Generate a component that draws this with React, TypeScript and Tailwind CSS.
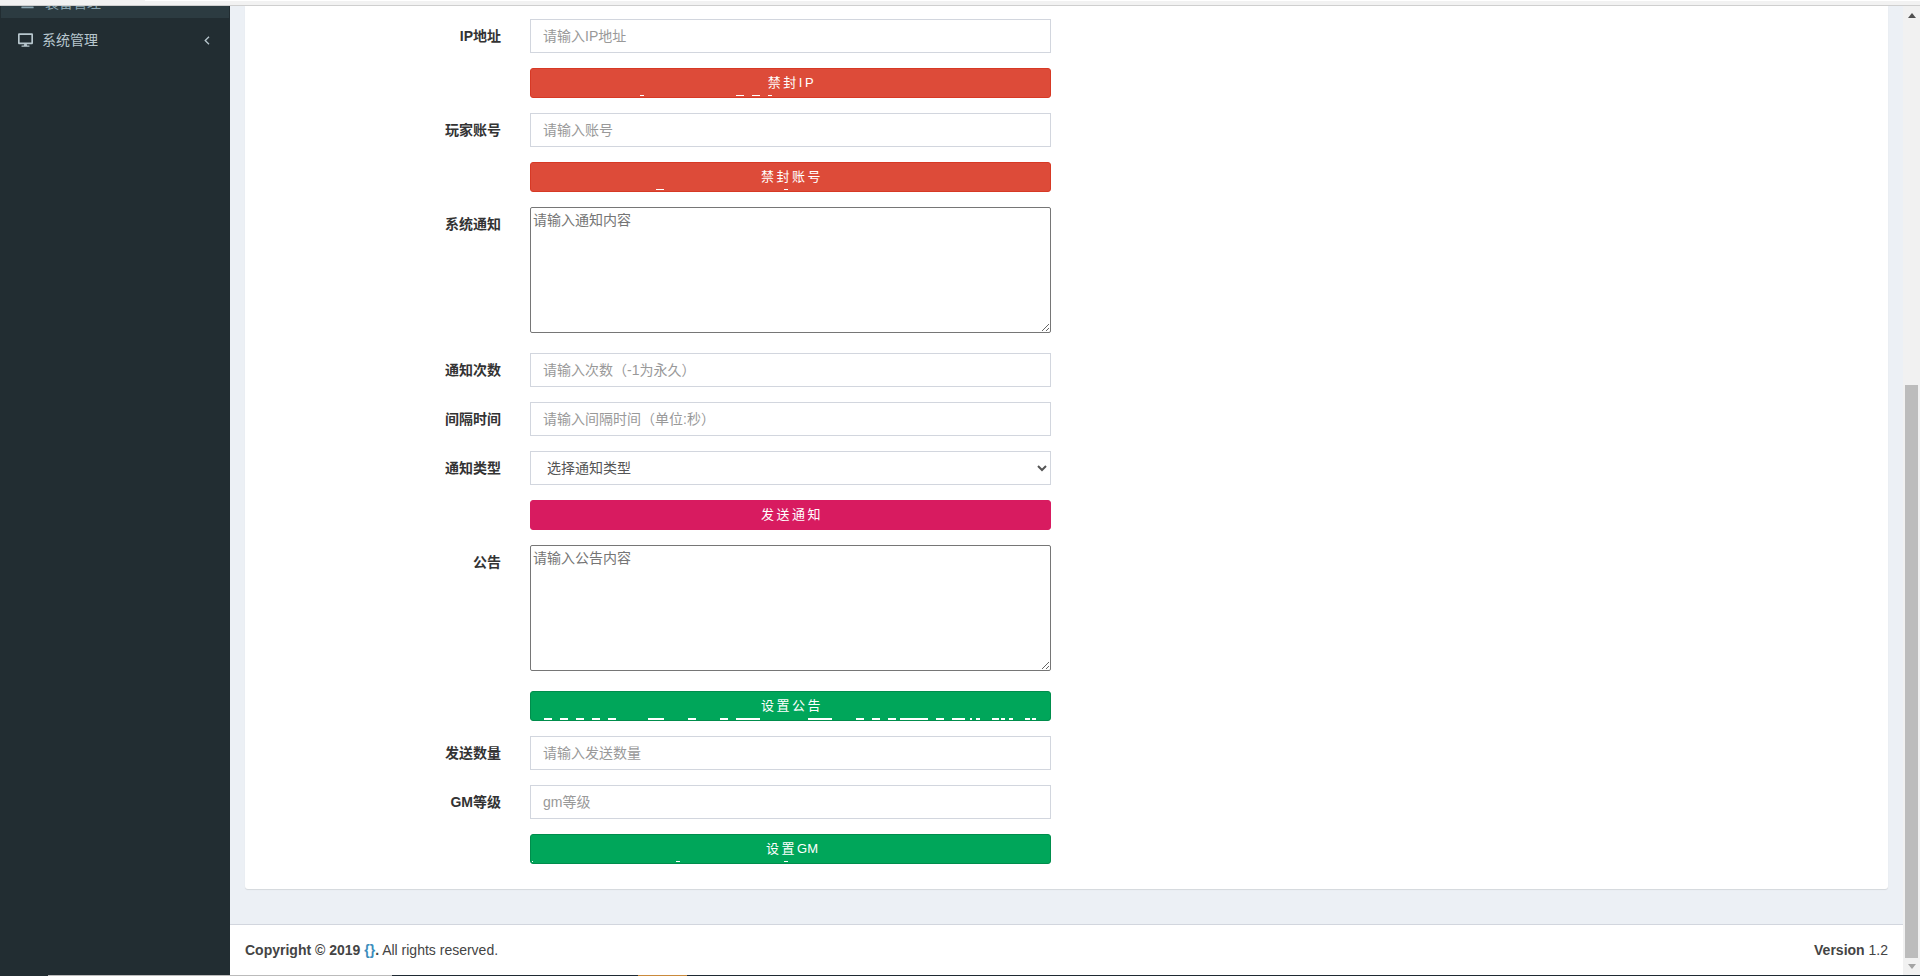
import { FaDesktop, FaBars } from "react-icons/fa";

type Dash = [number, number, number?];

function Marks({ dashes, h, bottom }: { dashes: Dash[]; h: number; bottom: number }) {
  return (
    <>
      {dashes.map(([a, b], i) => (
        <span
          key={i}
          className="absolute bg-white"
          style={{ left: a - 531, width: b - a, height: h, bottom }}
        />
      ))}
    </>
  );
}

function Row({ label, children, tall }: { label?: string; children: React.ReactNode; tall?: boolean }) {
  return (
    <div className={tall ? "flex mb-[20px]" : "flex mb-[15px]"}>
      <div className="w-[256px] shrink-0 pt-[7px] text-right text-[14px] leading-[20px] font-bold text-[#333]">{label}</div>
      <div className="ml-[29px] w-[521px] shrink-0">{children}</div>
    </div>
  );
}

function TextInput({ placeholder }: { placeholder: string }) {
  return (
    <input
      placeholder={placeholder}
      className="block h-[34px] w-full border border-[#d2d6de] bg-white px-[12px] py-[6px] text-[14px] text-[#555] placeholder:text-[#999] outline-none"
    />
  );
}

function Area({ placeholder }: { placeholder: string }) {
  return (
    <textarea
      placeholder={placeholder}
      className="block h-[126px] w-full rounded-[2px] border border-[#767676] bg-white p-[2px] text-[14px] leading-[20px] placeholder:text-[#757575] outline-none"
    />
  );
}

function Btn({ children, color, dashes = [], h = 1, bottom = 1 }: { children: React.ReactNode; color: string; dashes?: Dash[]; h?: number; bottom?: number }) {
  return (
    <div className={`relative flex h-[30px] w-full items-center justify-center rounded-[3px] border pl-[3px] text-[13px] tracking-[2.5px] text-white ${color}`}>
      {children}
      <Marks dashes={dashes} h={h} bottom={bottom} />
    </div>
  );
}

const RED = "bg-[#dd4b39] border-[#d73925]";
const GREEN = "bg-[#00a65a] border-[#008d4c]";
const PINK = "bg-[#d81b60] border-[#d81b60]";

const greenDashes: Dash[] = [
  [544, 552], [560, 568], [576, 584], [592, 600], [608, 616], [648, 664], [688, 696], [720, 728],
  [736, 760], [808, 832], [856, 864], [872, 880], [888, 896], [900, 928], [936, 944], [952, 965],
  [970, 972], [976, 980], [992, 999], [1001, 1005], [1009, 1013], [1025, 1030], [1032, 1036],
];

export default function App() {
  return (
    <div className="flex h-[976px] w-[1920px] flex-col overflow-hidden bg-white font-['Liberation_Sans','Noto_Sans_CJK_SC',sans-serif]">
      <div className="flex h-[1px] shrink-0">
        <div className="w-[145px] bg-[#f2f2f2]" />
        <div className="flex-1 bg-white" />
      </div>
      <div className="h-[4px] shrink-0 bg-[#f2f2f2]" />
      <div className="h-[1px] shrink-0 bg-[#cfcfcf]" />

      <div className="flex min-h-0 flex-1">
        <aside className="w-[230px] shrink-0 bg-[#222d32]">
          <div className="ml-[1px] h-[12px] w-[228px] overflow-hidden bg-[#2c3b41]">
            <div className="-mt-[13px] flex h-[20px] items-center gap-[10px] pl-[19px] text-[14px] leading-[20px] text-[#8aa4af]">
              <FaBars className="h-[14px] w-[15px]" />
              <span>装备管理</span>
            </div>
          </div>
          <div className="flex h-[44px] items-center pl-[18px] pr-[20px] text-[14px] text-[#b8c7ce]">
            <FaDesktop className="h-[14px] w-[15px]" />
            <span className="ml-[9px] flex-1">系统管理</span>
            <svg width="6" height="9" viewBox="0 0 6 9" className="shrink-0 fill-none stroke-[#b8c7ce] stroke-[1.3]"><path d="M5 .7 1.2 4.5 5 8.3" /></svg>
          </div>
        </aside>

        <main className="flex min-w-0 flex-1 flex-col bg-[#ecf0f5]">
          <div className="flex-1 px-[15px]">
            <div className="rounded-b-[3px] bg-white pt-[13px] pb-[10px] shadow-[0_1px_1px_rgba(0,0,0,0.1)]">
              <Row label="IP地址"><TextInput placeholder="请输入IP地址" /></Row>
              <Row><Btn color={RED} dashes={[[640, 644], [736, 744], [752, 760], [768, 772]]}>禁封IP</Btn></Row>
              <Row label="玩家账号"><TextInput placeholder="请输入账号" /></Row>
              <Row><Btn color={RED} dashes={[[656, 664], [784, 788]]}>禁封账号</Btn></Row>
              <Row label="系统通知" tall><Area placeholder="请输入通知内容" /></Row>
              <Row label="通知次数"><TextInput placeholder="请输入次数（-1为永久）" /></Row>
              <Row label="间隔时间"><TextInput placeholder="请输入间隔时间（单位:秒）" /></Row>
              <Row label="通知类型">
                <select defaultValue="" className="block h-[34px] w-full border border-[#d2d6de] bg-white px-[12px] text-[14px] text-[#555] outline-none">
                  <option value="">选择通知类型</option>
                </select>
              </Row>
              <Row><Btn color={PINK}>发送通知</Btn></Row>
              <Row label="公告" tall><Area placeholder="请输入公告内容" /></Row>
              <Row><Btn color={GREEN} dashes={greenDashes} h={2} bottom={0}>设置公告</Btn></Row>
              <Row label="发送数量"><TextInput placeholder="请输入发送数量" /></Row>
              <Row label="GM等级"><TextInput placeholder="gm等级" /></Row>
              <Row><Btn color={GREEN} dashes={[[532, 533], [676, 680], [784, 788]]}>设置<span className="tracking-normal">GM</span></Btn></Row>
            </div>
          </div>
          <footer className="flex h-[51px] shrink-0 items-center justify-between border-t border-[#d2d6de] bg-white px-[15px] text-[14px] leading-[20px] text-[#444]">
            <div>
              <b>Copyright © 2019 <span className="text-[#3c8dbc]">{"{}"}</span>.</b> All rights reserved.
            </div>
            <div>
              <b>Version</b> 1.2
            </div>
          </footer>
        </main>

        <div className="flex w-[17px] shrink-0 flex-col items-center bg-[#f1f1f1]">
          <svg width="8" height="5" viewBox="0 0 8 5" className="mt-[7px] shrink-0 fill-[#505050]"><path d="M4 0 8 5H0Z" /></svg>
          <div className="min-h-0 flex-1" />
          <div className="h-[573px] w-[13px] shrink-0 bg-[#bcbcbc]" />
          <svg width="8" height="5" viewBox="0 0 8 5" className="mt-[6px] mb-[6px] shrink-0 fill-[#a3a3a3]"><path d="M0 0H8L4 5Z" /></svg>
        </div>
      </div>

      <div className="flex h-[1px] shrink-0 bg-[#1f2a33]">
        <div className="w-[48px] bg-[#222d32]" />
        <div className="w-[344px] bg-[#bbbbbb]" />
        <div className="w-[246px]" />
        <div className="w-[49px] bg-[#c98a3c]" />
      </div>
    </div>
  );
}
